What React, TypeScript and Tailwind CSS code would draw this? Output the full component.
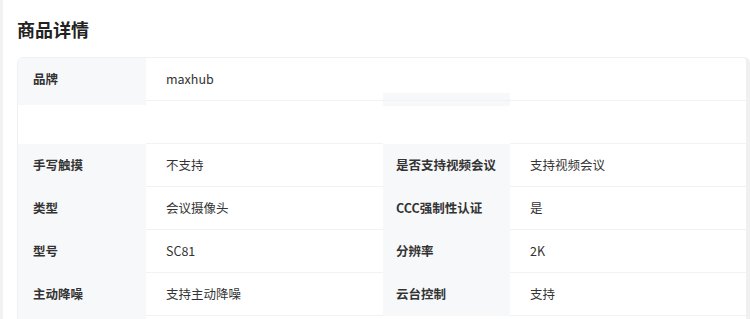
const rows: [string, string, string, string][] = [
  ['手写触摸', '不支持', '是否支持视频会议', '支持视频会议'],
  ['类型', '会议摄像头', 'CCC强制性认证', '是'],
  ['型号', 'SC81', '分辨率', '2K'],
  ['主动降噪', '支持主动降噪', '云台控制', '支持'],
];

const label = 'h-[43px] flex items-center bg-[#f7f8fa] text-[12.5px] font-bold text-[#333]';
const value = 'h-[43px] flex items-center border-b border-[#f2f2f2] text-[12.5px] text-[#333]';

export default function App() {
  return (
    <div
      className="flex min-h-[319px] w-[750px] overflow-hidden bg-white"
      style={{ fontFamily: '"Noto Sans CJK SC", "Noto Sans", sans-serif' }}
    >
      <div className="w-[3px] shrink-0 bg-[#f2f2f2]" />
      <div className="flex-1 pl-[14px]">
        <h2 className="pt-[16px] pb-[15px] text-[18px] leading-[26px] font-bold text-[#222]">商品详情</h2>
        <div className="rounded-t-md border-t border-l border-r-[4px] border-[#f0f0f0]">
          <div className="grid grid-cols-[128px_237px_127px_1fr]">
            <div className={`${label} pl-[15px]`}>品牌</div>
            <div className={`${value} pl-[20px]`}>maxhub</div>
            <div className="flex h-[43px] flex-col justify-end border-b border-[#f2f2f2]">
              <div className="h-[7px] bg-[#f7f8fa]" />
            </div>
            <div className={value} />

            <div className="h-[43px]">
              <div className="h-[4px] bg-[#f7f8fa]" />
            </div>
            <div className={value} />
            <div className="h-[43px]">
              <div className="h-[5px] bg-[#f7f8fa]" />
            </div>
            <div className={value} />

            {rows.map(([l1, v1, l2, v2]) => (
              <div key={l1} className="contents">
                <div className={`${label} pl-[15px]`}>{l1}</div>
                <div className={`${value} pl-[20px]`}>{v1}</div>
                <div className={`${label} pl-[13px]`}>{l2}</div>
                <div className={`${value} pl-[20px]`}>{v2}</div>
              </div>
            ))}
            <div className="h-[10px] bg-[#f7f8fa]" />
          </div>
        </div>
      </div>
    </div>
  );
}
